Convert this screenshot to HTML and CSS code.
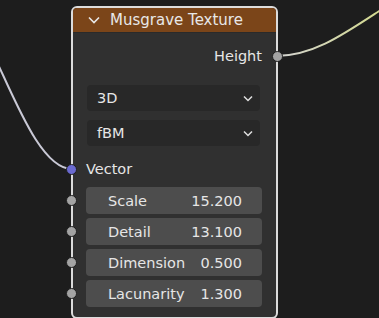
FILE: index.html
```html
<!DOCTYPE html>
<html>
<head>
<meta charset="utf-8">
<link rel="stylesheet" href="styles.css">
</head>
<body>
<div class="canvas">
  <svg class="wires" width="379" height="318" viewBox="0 0 379 318">
    <defs>
      <linearGradient id="wr" x1="276" y1="0" x2="379" y2="0" gradientUnits="userSpaceOnUse">
        <stop offset="0" stop-color="#d4d4d4"/>
        <stop offset="1" stop-color="#d3d98f"/>
      </linearGradient>
    </defs>
    <path d="M -40 10 C -10 10 25 169 72 169" fill="none" stroke="#c9c9d6" stroke-width="2"/>
    <path d="M 276 56 C 330 56 370 10 440 -25" fill="none" stroke="url(#wr)" stroke-width="2"/>
  </svg>
  <div class="node">
    <div class="header">
      <svg class="chev" width="12" height="8" viewBox="0 0 12 8"><path d="M1 1.5 L6 6.5 L11 1.5" fill="none" stroke="#e8e8e8" stroke-width="1.6"/></svg>
      <span class="title">Musgrave Texture</span>
    </div>
    <div class="row out">
      <span>Height</span>
      <span class="sock grey right"></span>
    </div>
    <div class="drop first"><span>3D</span><svg width="10" height="7" viewBox="0 0 10 7"><path d="M1 1.5 L5 5.5 L9 1.5" fill="none" stroke="#e0e0e0" stroke-width="1.5"/></svg></div>
    <div class="drop second"><span>fBM</span><svg width="10" height="7" viewBox="0 0 10 7"><path d="M1 1.5 L5 5.5 L9 1.5" fill="none" stroke="#e0e0e0" stroke-width="1.5"/></svg></div>
    <div class="row in">
      <span class="sock blue left"></span>
      <span>Vector</span>
    </div>
    <div class="fields">
      <div class="field"><span class="sock grey left"></span><span>Scale</span><span>15.200</span></div>
      <div class="field"><span class="sock grey left"></span><span>Detail</span><span>13.100</span></div>
      <div class="field"><span class="sock grey left"></span><span>Dimension</span><span>0.500</span></div>
      <div class="field"><span class="sock grey left"></span><span>Lacunarity</span><span>1.300</span></div>
    </div>
  </div>
</div>
</body>
</html>
```
FILE: styles.css
```css
* { box-sizing: border-box; }
html, body { margin: 0; padding: 0; }
body {
  background: #1d1d1d;
  width: 379px;
  height: 318px;
  overflow: hidden;
  font-family: "DejaVu Sans", sans-serif;
  color: #e6e6e6;
}
.canvas { position: relative; width: 379px; height: 318px; }
.wires { position: absolute; left: 0; top: 0; }
.node {
  position: absolute;
  left: 71px;
  top: 6px;
  width: 207px;
  height: 313px;
  border: 2px solid #dcdcdc;
  border-radius: 6px;
  background: #303030;
  display: flex;
  flex-direction: column;
}
.header {
  height: 25px;
  background: #7b4519;
  border-radius: 4px 4px 0 0;
  display: flex;
  align-items: center;
  padding-left: 15px;
  gap: 10px;
  font-size: 15px;
  border-bottom: 1px solid #2a2a2a;
}
.title { color: #e8e8e8; }
.row {
  position: relative;
  height: 24px;
  display: flex;
  align-items: center;
  font-size: 14.5px;
}
.out { margin-top: 11px; justify-content: flex-end; padding-right: 14px; }
.in { margin-top: 11px; padding-left: 13px; }
.sock {
  position: absolute;
  width: 11px;
  height: 11px;
  border-radius: 50%;
  top: 50%;
  margin-top: -5.5px;
  border: 1px solid #1f1f1f;
}
.grey { background: #a3a3a3; }
.blue { background: #6a6ad0; }
.sock.left { left: -20px; }
.row .sock.left { left: -7px; }
.sock.right { right: -7px; }
.drop {
  margin: 0 16px 0 14px;
  height: 26px;
  background: #282828;
  border-radius: 4px;
  display: flex;
  align-items: center;
  justify-content: space-between;
  padding: 0 7px 0 10px;
  font-size: 14.5px;
}
.first { margin-top: 17px; }
.second { margin-top: 9px; }
.fields {
  display: flex;
  flex-direction: column;
  gap: 4px;
  margin: 6px 14px 0 13px;
}
.field {
  position: relative;
  height: 27px;
  background: #4d4d4d;
  border-radius: 4px;
  display: flex;
  align-items: center;
  justify-content: space-between;
  padding: 1px 20px 0 22px;
  font-size: 14.5px;
}
.field .sock.left { left: -20px; }
```
